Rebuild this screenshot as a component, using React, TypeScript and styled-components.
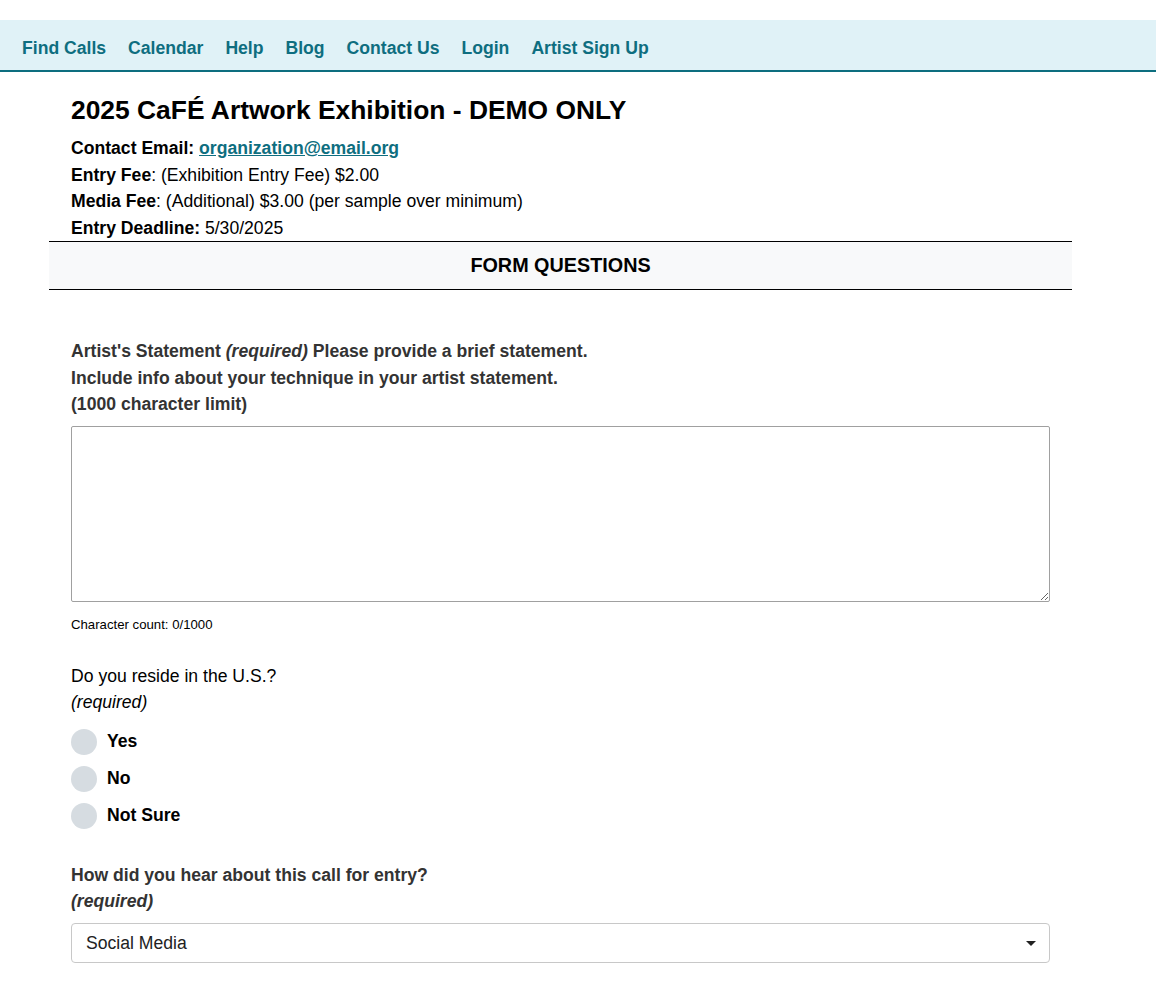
import React from "react";
import styled, { createGlobalStyle } from "styled-components";

const GlobalStyle = createGlobalStyle`
  html, body {
    margin: 0;
    padding: 0;
    background: #fff;
  }
  body {
    font-family: "Liberation Sans", Arial, Helvetica, sans-serif;
    color: #000;
  }
  * {
    box-sizing: border-box;
  }
`;

const Page = styled.div`
  padding-top: 20px;
`;

const NavBar = styled.nav`
  display: flex;
  align-items: center;
  height: 52px;
  padding: 6px 11px 0;
  background: #e0f2f7;
  border-bottom: 2px solid #0d6e7f;
`;

const NavLink = styled.a`
  padding: 0 11px;
  font-size: 17.6px;
  font-weight: 700;
  color: #0e6e80;
  text-decoration: none;
  line-height: 24px;
`;

const Main = styled.main`
  width: 1023px;
  margin-left: 49px;
`;

const Intro = styled.div`
  padding: 23px 22px 0;
`;

const Title = styled.h1`
  margin: 0 0 10px;
  font-size: 26.4px;
  line-height: 30px;
  font-weight: 700;
`;

const InfoLine = styled.div`
  font-size: 17.6px;
  line-height: 26.5px;
`;

const Strong = styled.b`
  font-weight: 700;
`;

const MailLink = styled.a`
  font-weight: 700;
  color: #0e6e80;
  text-decoration: underline;
`;

const SectionHeader = styled.div`
  height: 49px;
  display: flex;
  align-items: center;
  justify-content: center;
  border-top: 1px solid #000;
  border-bottom: 1px solid #000;
  background: #f8f9fa;
  font-size: 19.8px;
  font-weight: 700;
`;

const Form = styled.form`
  padding: 48px 22px 0;
`;

const Question = styled.div<{ $gap?: number }>`
  margin-bottom: ${(p) => p.$gap ?? 0}px;
`;

const Label = styled.label<{ $dark?: boolean; $bold?: boolean }>`
  display: block;
  font-size: 17.6px;
  line-height: 26.5px;
  font-weight: ${(p) => (p.$bold ? 700 : 400)};
  color: ${(p) => (p.$dark ? "#333" : "#000")};
`;

const Req = styled.i`
  font-style: italic;
`;

const TextArea = styled.textarea`
  display: block;
  width: 100%;
  height: 176px;
  margin-top: 8px;
  border: 1px solid #a0a0a0;
  border-radius: 2px;
  padding: 6px 8px;
  font-family: inherit;
  font-size: 17.6px;
  resize: both;
`;

const Counter = styled.div`
  margin-top: 14px;
  font-size: 13.2px;
  line-height: 18px;
`;

const RadioList = styled.div`
  display: flex;
  flex-direction: column;
  gap: 11px;
  margin-top: 13px;
`;

const RadioRow = styled.label`
  display: flex;
  align-items: center;
  gap: 10px;
  font-size: 17.6px;
  font-weight: 700;
  cursor: pointer;
`;

const RadioDot = styled.input`
  appearance: none;
  margin: 0;
  width: 26px;
  height: 26px;
  border-radius: 50%;
  background: #d6dce1;
  border: none;
`;

const SelectWrap = styled.div`
  position: relative;
  margin-top: 8px;

  &::after {
    content: "";
    position: absolute;
    right: 14px;
    top: 18px;
    border-left: 5px solid transparent;
    border-right: 5px solid transparent;
    border-top: 5px solid #222;
    pointer-events: none;
  }
`;

const Select = styled.select`
  appearance: none;
  display: block;
  width: 100%;
  height: 40px;
  padding: 0 14px;
  border: 1px solid #c8c8c8;
  border-radius: 4px;
  background: #fff;
  font-family: inherit;
  font-size: 17.6px;
  color: #222;
`;

const navItems = ["Find Calls", "Calendar", "Help", "Blog", "Contact Us", "Login", "Artist Sign Up"];
const residence = ["Yes", "No", "Not Sure"];

const App = () => {
  const [statement, setStatement] = React.useState("");
  const [source, setSource] = React.useState("Social Media");

  return (
    <Page>
      <GlobalStyle />
      <NavBar>
        {navItems.map((item) => (
          <NavLink key={item} href="#">
            {item}
          </NavLink>
        ))}
      </NavBar>

      <Main>
        <Intro>
          <Title>2025 CaFÉ Artwork Exhibition - DEMO ONLY</Title>
          <InfoLine>
            <Strong>Contact Email: </Strong>
            <MailLink href="#">organization@email.org</MailLink>
          </InfoLine>
          <InfoLine>
            <Strong>Entry Fee</Strong>: (Exhibition Entry Fee) $2.00
          </InfoLine>
          <InfoLine>
            <Strong>Media Fee</Strong>: (Additional) $3.00 (per sample over minimum)
          </InfoLine>
          <InfoLine>
            <Strong>Entry Deadline:</Strong> 5/30/2025
          </InfoLine>
        </Intro>

        <SectionHeader>FORM QUESTIONS</SectionHeader>

        <Form onSubmit={(e) => e.preventDefault()}>
          <Question $gap={29}>
            <Label $dark $bold>
              Artist's Statement <Req>(required)</Req> Please provide a brief statement.
              <br />
              Include info about your technique in your artist statement.
              <br />
              (1000 character limit)
            </Label>
            <TextArea
              value={statement}
              maxLength={1000}
              onChange={(e) => setStatement(e.target.value)}
            />
            <Counter>Character count: {statement.length}/1000</Counter>
          </Question>

          <Question $gap={33}>
            <Label>Do you reside in the U.S.?</Label>
            <Label>
              <Req>(required)</Req>
            </Label>
            <RadioList>
              {residence.map((opt) => (
                <RadioRow key={opt}>
                  <RadioDot type="radio" name="residence" value={opt} />
                  {opt}
                </RadioRow>
              ))}
            </RadioList>
          </Question>

          <Question>
            <Label $dark $bold>
              How did you hear about this call for entry?
            </Label>
            <Label $dark $bold>
              <Req>(required)</Req>
            </Label>
            <SelectWrap>
              <Select value={source} onChange={(e) => setSource(e.target.value)}>
                <option>Social Media</option>
                <option>Email</option>
                <option>Website</option>
                <option>Friend</option>
                <option>Other</option>
              </Select>
            </SelectWrap>
          </Question>
        </Form>
      </Main>
    </Page>
  );
};

export default App;
